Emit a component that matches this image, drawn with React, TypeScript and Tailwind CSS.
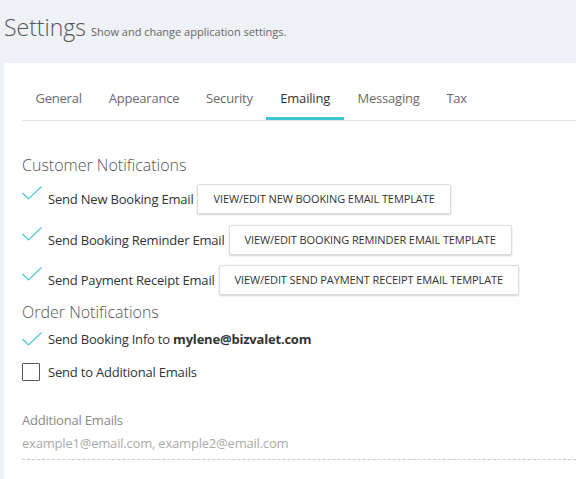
import React from "react";

const Check = ({ className = "" }: { className?: string }) => (
  <svg className={className} width="20" height="14" viewBox="0 0 20 14" fill="none">
    <polyline points="0.5,7 6.5,13 19.5,0.5" stroke="#4cc8d8" strokeWidth="1.2" />
  </svg>
);

const tabs = ["General", "Appearance", "Security", "Emailing", "Messaging", "Tax"];

const TemplateRow = ({ label, button }: { label: string; button: string }) => (
  <div className="flex items-start h-[30px]">
    <Check className="mt-[2px] shrink-0" />
    <span className="ml-[6px] self-center text-[13px] leading-[18px] tracking-[-0.2px] text-[#333]">{label}</span>
    <button className="ml-[4px] h-[30px] px-[15px] bg-white border border-[#dcdcdc] rounded-[2px] shadow-[0_1px_2px_rgba(0,0,0,0.18)] text-[11px] leading-[28px] tracking-[-0.1px] text-[#333] uppercase whitespace-nowrap">
      {button}
    </button>
  </div>
);

export default function App() {
  return (
    <div
      className="min-h-screen bg-[#eef1f5] pl-[4px] overflow-hidden"
      style={{ fontFamily: '"Open Sans", "Noto Sans", sans-serif' }}
    >
      <div className="h-[63px] pt-[12px] flex items-baseline">
        <h1 className="text-[23px] leading-[30px] font-light text-[#555]">Settings</h1>
        <span className="ml-[5px] text-[11px] text-[#666]">Show and change application settings.</span>
      </div>
      <div className="bg-white pl-[18px] pt-[15px] min-h-[416px]">
        <div className="flex border-b border-[#dde2e8]">
          {tabs.map((t) => (
            <div
              key={t}
              className={`pt-[11px] pb-[10px] text-[13px] leading-[18px] tracking-[-0.2px] border-b-[3px] ${
                t === "Emailing" ? "px-[14px] border-[#3cc6d2] text-[#333]" : "px-[13.4px] border-transparent text-[#6a6a6a]"
              }`}
            >
              {t}
            </div>
          ))}
        </div>

        <h2 className="mt-[33px] text-[16px] leading-[22px] font-light text-[#555]">Customer Notifications</h2>
        <div className="mt-[8px] flex flex-col">
          <TemplateRow label="Send New Booking Email" button="View/Edit New Booking Email Template" />
          <div className="mt-[11px]">
            <TemplateRow label="Send Booking Reminder Email" button="View/Edit Booking Reminder Email Template" />
          </div>
          <div className="mt-[10px]">
            <TemplateRow label="Send Payment Receipt Email" button="View/Edit Send Payment Receipt Email Template" />
          </div>
        </div>

        <h2 className="mt-[6px] text-[16px] leading-[22px] font-light text-[#555]">Order Notifications</h2>
        <div className="mt-[6px] flex items-start h-[20px]">
          <Check className="mt-[3px] shrink-0" />
          <span className="ml-[6px] text-[13px] leading-[20px] tracking-[-0.2px] text-[#333]">
            Send Booking Info to <span className="font-bold">mylene@bizvalet.com</span>
          </span>
        </div>
        <div className="mt-[14px] flex items-center h-[18px]">
          <div className="w-[18px] h-[18px] border border-[#555] rounded-[1px] shrink-0" />
          <span className="ml-[8px] text-[13px] leading-[18px] tracking-[-0.2px] text-[#333]">Send to Additional Emails</span>
        </div>

        <div className="mt-[30px] text-[13px] leading-[18px] tracking-[-0.2px] text-[#888]">Additional Emails</div>
        <div className="mt-[5px] pb-[7px] border-b border-dashed border-[#c3c9d6] text-[13px] leading-[18px] tracking-[-0.2px] text-[#aaa]">
          example1@email.com, example2@email.com
        </div>
      </div>
    </div>
  );
}
